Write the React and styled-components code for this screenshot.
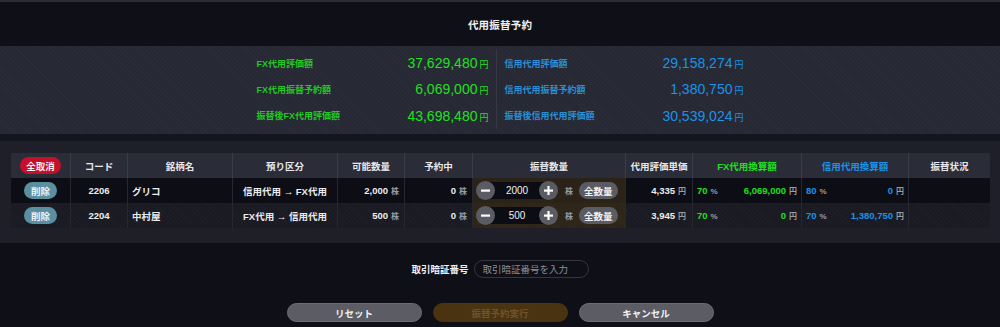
import React from "react";
import styled, { createGlobalStyle } from "styled-components";

const GlobalStyle = createGlobalStyle`
  html, body {
    margin: 0;
    padding: 0;
    background: #0f1017;
  }
  body {
    font-family: "Liberation Sans", "Noto Sans CJK JP", sans-serif;
    color: #e6e6ea;
  }
  * { box-sizing: border-box; }
`;

const GREEN = "#1fe01f";
const GREEN_LABEL = "#23c823";
const BLUE = "#1a93e8";
const BLUE_LABEL = "#2a8fd6";

const texture = `
  background-image: repeating-linear-gradient(
    45deg,
    rgba(255, 255, 255, 0.018) 0 1px,
    transparent 1px 3px
  );
`;

const Page = styled.div`
  width: 1000px;
  height: 327px;
  display: flex;
  flex-direction: column;
  background: #0f1017;
  overflow: hidden;
`;

const Header = styled.div`
  height: 46px;
  border-top: 2px solid #2b2c34;
  display: flex;
  align-items: center;
  justify-content: center;
  font-size: 10.5px;
  font-weight: 700;
  color: #f0f0f2;
  letter-spacing: 0.2px;
`;

const Summary = styled.div`
  height: 88px;
  background-color: #262833;
  ${texture}
  display: flex;
  justify-content: center;
  padding: 3px 0 4px 0;
`;

const SummaryCol = styled.div`
  width: ${(p) => (p.$right ? "248px" : "239px")};
  padding: ${(p) => (p.$right ? "0 0 0 8px" : "0 7px 0 0")};
  border-left: ${(p) => (p.$right ? "1px solid #363844" : "none")};
  display: flex;
  flex-direction: column;
  margin: 1px 0;
`;

const SummaryRow = styled.div`
  height: 27px;
  display: flex;
  align-items: center;
  justify-content: space-between;
`;

const SummaryLabel = styled.span`
  font-size: 9px;
  font-weight: 700;
  color: ${(p) => p.$color};
`;

const SummaryValue = styled.span`
  font-size: 14px;
  color: ${(p) => p.$color};
  display: flex;
  align-items: baseline;
  gap: 2px;
`;

const Yen = styled.span`
  font-size: 9px;
  color: ${(p) => p.$color || "#9a9ba2"};
`;

const Band = styled.div`
  height: 7px;
  background: #15161d;
`;

const TablePanel = styled.div`
  height: 102px;
  background-color: #1e1f28;
  padding: 12px 10px 0 11px;
`;

const Grid = styled.div`
  display: grid;
  grid-template-columns: 59px 57px 105px 105px 67px 68px 153px 67px 109px 107px 1fr;
  font-size: 9.5px;
  font-weight: 700;
`;

const HeadCell = styled.div`
  height: 25px;
  background: #2a2c37;
  border-left: ${(p) => (p.$first ? "none" : "1px solid #3a3c48")};
  display: flex;
  align-items: center;
  justify-content: center;
  color: ${(p) => p.$color || "#e8e8ec"};
`;

const Cell = styled.div`
  height: 25px;
  background-color: ${(p) => (p.$qty ? (p.$odd ? "#2b2318" : "#2e2519") : p.$odd ? "#0d0e15" : "#1a1b22")};
  ${(p) => (p.$odd ? "" : texture)}
  border-left: ${(p) => (p.$first ? "none" : "1px solid #262730")};
  display: flex;
  align-items: center;
  justify-content: ${(p) => p.$justify || "center"};
  padding: 0 ${(p) => p.$pr || "0"} 0 ${(p) => p.$pl || "0"};
  color: ${(p) => p.$color || "#ececf0"};
  white-space: nowrap;
`;

const Pill = styled.button`
  border: none;
  border-radius: 9px;
  height: 17px;
  padding: 0 ${(p) => p.$pad || "6px"};
  background: ${(p) => p.$bg};
  color: #f2f2f4;
  font-family: inherit;
  font-size: 9.5px;
  font-weight: 700;
  display: flex;
  align-items: center;
  justify-content: center;
  white-space: nowrap;
  flex-shrink: 0;
`;

const Unit = styled.span`
  font-size: 8px;
  color: #9a9ba2;
  margin-left: 3px;
`;

const Num = styled.span`
  display: flex;
  align-items: baseline;
  color: ${(p) => p.$color || "inherit"};
`;

const Stepper = styled.div`
  display: flex;
  align-items: center;
  position: relative;
  width: 82px;
  height: 19px;
  flex-shrink: 0;
`;

const StepInput = styled.div`
  position: absolute;
  left: 14px;
  right: 14px;
  top: 1px;
  bottom: 1px;
  background: #0c0d14;
  display: flex;
  align-items: center;
  justify-content: center;
  font-size: 10px;
  font-weight: 400;
  color: #f0f0f2;
`;

const RoundBtn = styled.span`
  position: relative;
  z-index: 1;
  width: 19px;
  height: 19px;
  border-radius: 50%;
  background: #5a5b63;
  display: flex;
  align-items: center;
  justify-content: center;
  margin-left: ${(p) => (p.$push ? "auto" : "0")};
`;

const QtyUnit = styled.span`
  font-size: 8px;
  color: #9a9ba2;
  margin: 0 6px 0 7px;
`;

const Bottom = styled.div`
  flex: 1;
  display: flex;
  flex-direction: column;
  align-items: center;
  padding-top: 17px;
`;

const PinRow = styled.div`
  display: flex;
  align-items: center;
  gap: 5px;
  height: 18px;
`;

const PinLabel = styled.span`
  font-size: 9.5px;
  font-weight: 700;
  color: #f0f0f2;
`;

const PinInput = styled.input`
  width: 115px;
  height: 18px;
  border-radius: 9px;
  border: 1px solid #33343d;
  background: #0f1017;
  padding: 0 0 0 8px;
  font-family: inherit;
  font-size: 9.5px;
  color: #ddd;
  outline: none;
  &::placeholder {
    color: #8e8f96;
  }
`;

const Actions = styled.div`
  display: flex;
  gap: 11px;
  margin-top: 25px;
`;

const ActionBtn = styled.button`
  width: 135px;
  height: 19px;
  border-radius: 10px;
  border: 1px solid ${(p) => (p.$disabled ? "#4a3412" : "#6c6d75")};
  background: ${(p) => (p.$disabled ? "#4a3311" : "#5b5c64")};
  color: ${(p) => (p.$disabled ? "#6e5428" : "#f2f2f4")};
  font-family: inherit;
  font-size: 9.5px;
  font-weight: 700;
`;

const Minus = () => (
  <svg width="9" height="9" viewBox="0 0 9 9">
    <rect x="0" y="3.5" width="9" height="2.2" fill="#fff" />
  </svg>
);

const Plus = () => (
  <svg width="9" height="9" viewBox="0 0 9 9">
    <rect x="0" y="3.5" width="9" height="2.2" fill="#fff" />
    <rect x="3.4" y="0" width="2.2" height="9" fill="#fff" />
  </svg>
);

const summaryLeft = [
  ["FX代用評価額", "37,629,480"],
  ["FX代用振替予約額", "6,069,000"],
  ["振替後FX代用評価額", "43,698,480"],
];

const summaryRight = [
  ["信用代用評価額", "29,158,274"],
  ["信用代用振替予約額", "1,380,750"],
  ["振替後信用代用評価額", "30,539,024"],
];

const rows = [
  {
    code: "2206",
    name: "グリコ",
    kind: "信用代用 → FX代用",
    avail: "2,000",
    reserved: "0",
    qty: "2000",
    unit: "4,335",
    fxRate: "70",
    fxAmt: "6,069,000",
    crRate: "80",
    crAmt: "0",
  },
  {
    code: "2204",
    name: "中村屋",
    kind: "FX代用 → 信用代用",
    avail: "500",
    reserved: "0",
    qty: "500",
    unit: "3,945",
    fxRate: "70",
    fxAmt: "0",
    crRate: "70",
    crAmt: "1,380,750",
  },
];

const headers = ["コード", "銘柄名", "預り区分", "可能数量", "予約中", "振替数量", "代用評価単価"];

export default function App() {
  return (
    <Page>
      <GlobalStyle />
      <Header>代用振替予約</Header>

      <Summary>
        <SummaryCol>
          {summaryLeft.map(([label, value]) => (
            <SummaryRow key={label}>
              <SummaryLabel $color={GREEN_LABEL}>{label}</SummaryLabel>
              <SummaryValue $color={GREEN}>
                {value}
                <Yen $color={GREEN}>円</Yen>
              </SummaryValue>
            </SummaryRow>
          ))}
        </SummaryCol>
        <SummaryCol $right>
          {summaryRight.map(([label, value]) => (
            <SummaryRow key={label}>
              <SummaryLabel $color={BLUE_LABEL}>{label}</SummaryLabel>
              <SummaryValue $color={BLUE}>
                {value}
                <Yen $color={BLUE}>円</Yen>
              </SummaryValue>
            </SummaryRow>
          ))}
        </SummaryCol>
      </Summary>

      <Band />

      <TablePanel>
        <Grid>
          <HeadCell $first>
            <Pill $bg="#c5102c">全取消</Pill>
          </HeadCell>
          {headers.map((h) => (
            <HeadCell key={h}>{h}</HeadCell>
          ))}
          <HeadCell $color={GREEN}>FX代用換算額</HeadCell>
          <HeadCell $color={BLUE}>信用代用換算額</HeadCell>
          <HeadCell>振替状況</HeadCell>

          {rows.map((r, i) => {
            const odd = i % 2 === 0;
            return (
              <React.Fragment key={r.code}>
                <Cell $first $odd={odd}>
                  <Pill $bg="#5a8fa2" $pad="7px">削除</Pill>
                </Cell>
                <Cell $odd={odd}>{r.code}</Cell>
                <Cell $odd={odd} $justify="flex-start" $pl="4px">
                  {r.name}
                </Cell>
                <Cell $odd={odd}>{r.kind}</Cell>
                <Cell $odd={odd} $justify="flex-end" $pr="5px">
                  <Num>
                    {r.avail}
                    <Unit>株</Unit>
                  </Num>
                </Cell>
                <Cell $odd={odd} $justify="flex-end" $pr="5px">
                  <Num>
                    {r.reserved}
                    <Unit>株</Unit>
                  </Num>
                </Cell>
                <Cell $odd={odd} $qty $justify="flex-start" $pl="3px">
                  <Stepper>
                    <RoundBtn>
                      <Minus />
                    </RoundBtn>
                    <StepInput>{r.qty}</StepInput>
                    <RoundBtn $push>
                      <Plus />
                    </RoundBtn>
                  </Stepper>
                  <QtyUnit>株</QtyUnit>
                  <Pill $bg="#5a5b63" $pad="5px">全数量</Pill>
                </Cell>
                <Cell $odd={odd} $justify="flex-end" $pr="6px">
                  <Num>
                    {r.unit}
                    <Unit>円</Unit>
                  </Num>
                </Cell>
                <Cell $odd={odd} $justify="space-between" $pl="4px" $pr="4px" $color={GREEN}>
                  <Num>
                    {r.fxRate}
                    <Unit>%</Unit>
                  </Num>
                  <Num>
                    {r.fxAmt}
                    <Unit>円</Unit>
                  </Num>
                </Cell>
                <Cell $odd={odd} $justify="space-between" $pl="4px" $pr="4px" $color={BLUE}>
                  <Num>
                    {r.crRate}
                    <Unit>%</Unit>
                  </Num>
                  <Num>
                    {r.crAmt}
                    <Unit>円</Unit>
                  </Num>
                </Cell>
                <Cell $odd={odd} />
              </React.Fragment>
            );
          })}
        </Grid>
      </TablePanel>

      <Bottom>
        <PinRow>
          <PinLabel>取引暗証番号</PinLabel>
          <PinInput placeholder="取引暗証番号を入力" />
        </PinRow>
        <Actions>
          <ActionBtn>リセット</ActionBtn>
          <ActionBtn $disabled>振替予約実行</ActionBtn>
          <ActionBtn>キャンセル</ActionBtn>
        </Actions>
      </Bottom>
    </Page>
  );
}
